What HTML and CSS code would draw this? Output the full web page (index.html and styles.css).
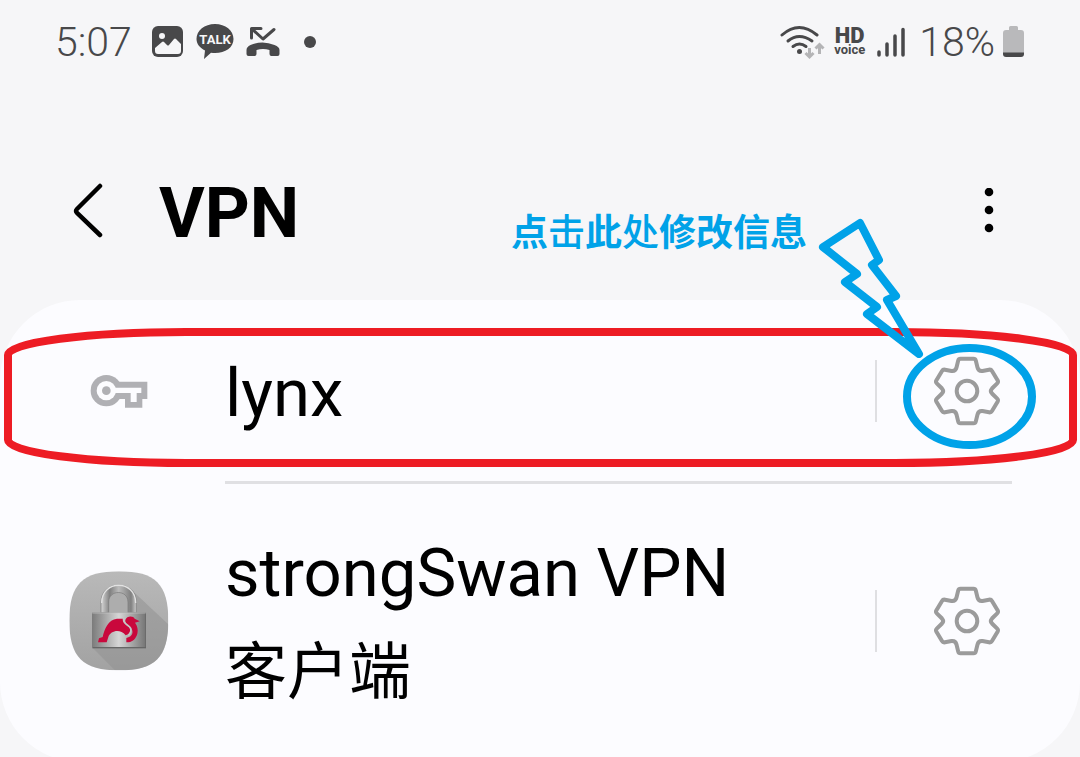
FILE: index.html
```
<!DOCTYPE html>
<html lang="zh-CN">
<head>
    <meta charset="UTF-8">
    <meta name="viewport" content="width=device-width, initial-scale=1.0">
    <title>VPN</title>
    <link rel="stylesheet" href="styles.css">
</head>
<body>
    <div class="statusbar">
        <span class="clock">5:07</span>
        <div class="notices">
            <svg width="32" height="32" viewBox="0 0 32 32">
                <rect width="31" height="31" x="0" y="0" rx="6" fill="#48484a"/>
                <circle cx="10" cy="10" r="3" fill="#f6f6f8"/>
                <path d="M3 22l7-6q1-1 2 0l3 3q1 1 2 0l5-6q1-1 2 0l5 5v7q0 3-3 3H6q-3 0-3-3z" fill="#f6f6f8"/>
            </svg>
            <svg width="38" height="36" viewBox="0 0 38 36">
                <path d="M19 0c10.500 0 18.500 6.500 18.500 15S29.500 29 19 29q-2 0-4-.3L8 35l1-8.500C4 24 .5 20 .5 15 .5 6.500 8.500 0 19 0z" fill="#48484a"/>
                <text x="19" y="20" class="talk" text-anchor="middle">TALK</text>
            </svg>
            <svg width="34" height="32" viewBox="0 0 34 32">
                <path d="M5.500 12V2.500H15M6 3l11 10L28 3.500" fill="none" stroke="#48484a" stroke-width="3" stroke-linecap="round" stroke-linejoin="round"/>
                <path d="M.5 28v-4q0-3 4-5 12-5 24 0 5 2 5 5v4q0 2-2 2h-6q-2 0-2-2v-4q-6.500-2-13 0v4q0 2-2 2h-6q-2 0-2-2z" fill="#48484a"/>
            </svg>
            <span class="dot"></span>
        </div>
        <div class="signals">
            <svg width="46" height="36" viewBox="0 0 46 36">
                <g fill="none" stroke="#48484a" stroke-width="3" stroke-linecap="round">
                    <path d="M2 11q17-15 35 0"/>
                    <path d="M8 17q11-9 24 0"/>
                    <path d="M13 22.500q6.500-5 13 0"/>
                </g>
                <circle cx="19.500" cy="27.500" r="2.500" fill="#48484a"/>
                <path d="M29.500 24v9m-4-4l4 4 4-4M39.500 30V20.500m-4 4l4-4 4 4" fill="none" stroke="#b4b4b6" stroke-width="3"/>
            </svg>
            <span class="hd"><b>HD</b><small>voice</small></span>
            <svg width="28" height="32" viewBox="0 0 28 32">
                <path d="M2 26v3M10 18v11M18 10v19M26 3.500V29" stroke="#48484a" stroke-width="3.500" stroke-linecap="round"/>
            </svg>
            <span class="percent">18%</span>
            <svg width="22" height="32" viewBox="0 0 22 32">
                <path d="M6 4V1.500Q6 0 7.500 0h6Q15 0 15 1.500V4h3q3 0 3 3v20H0V7q0-3 3-3z" fill="#b9b9bb"/>
                <path d="M0 26.500h21V28q0 3-3 3H3q-3 0-3-3z" fill="#48484a"/>
            </svg>
        </div>
    </div>

    <header class="appbar">
        <button class="back" aria-label="返回">
            <svg width="34" height="56" viewBox="0 0 34 56">
                <path d="M29 3L6 26q-2 2 0 4L29 52" fill="none" stroke="#000" stroke-width="4.500" stroke-linecap="round"/>
            </svg>
        </button>
        <h1>VPN</h1>
        <button class="more" aria-label="更多选项">
            <svg width="10" height="46" viewBox="0 0 10 46">
                <circle cx="5" cy="4" r="4.300"/>
                <circle cx="5" cy="22" r="4.300"/>
                <circle cx="5" cy="40" r="4.300"/>
            </svg>
        </button>
    </header>

    <!-- gear drawn once, used by every row -->
    <svg class="defs" width="0" height="0">
        <symbol id="gear" viewBox="-36 -36 72 72">
            <path d="M-6.500-32.300H6.500Q8.300-32.300 8.800-30.500L10.500-23.500Q11.500-19.500 15.500-20L22-21.300Q24-21.700 25-20L30.700-10.500Q31.500-9 30.200-7.700L25-2.500Q22.700 0 25 2.500L30.200 7.700Q31.500 9 30.700 10.500L25 20Q24 21.700 22 21.300L15.500 20Q11.500 19.500 10.500 23.500L8.800 30.500Q8.300 32.300 6.500 32.300H-6.500Q-8.300 32.300-8.800 30.500L-10.500 23.500Q-11.500 19.500-15.500 20L-22 21.300Q-24 21.700-25 20L-30.700 10.500Q-31.500 9-30.200 7.700L-25 2.500Q-22.700 0-25-2.500L-30.200-7.700Q-31.500-9-30.700-10.500L-25-20Q-24-21.700-22-21.300L-15.500-20Q-11.500-19.500-10.500-23.500L-8.800-30.500Q-8.300-32.300-6.500-32.300Z" fill="none" stroke="#9b9b9b" stroke-width="4"/>
            <circle r="10.300" fill="none" stroke="#9b9b9b" stroke-width="4"/>
        </symbol>
    </svg>

    <main class="card">
        <div class="row">
            <div class="icon">
                <svg width="58" height="34" viewBox="270 250 174 102">
                    <path d="M355 273H442V325H427V351H375V325H355z" fill="#b0b0b4"/>
                    <circle cx="319" cy="300" r="47" fill="#b0b0b4"/>
                    <circle cx="319" cy="300" r="29" fill="#fcfcff"/>
                    <path d="M340 291H424V307H410V334H392V307H340z" fill="#fcfcff"/>
                    <circle cx="319" cy="300" r="13" fill="#b0b0b4"/>
                </svg>
            </div>
            <span class="name">lynx</span>
            <button class="gear" aria-label="lynx 设置"><svg width="72" height="72"><use href="#gear"/></svg></button>
            <svg class="frame"><rect x="4" y="4" rx="178" ry="23"/></svg>
        </div>
        <hr>
        <div class="row tall">
            <div class="icon">
                <svg width="100" height="100" viewBox="56 62 300 300">
                    <defs>
                        <linearGradient id="tile" x1="0" y1="0" x2="0" y2="1">
                            <stop offset="0" stop-color="#b9b9b9"/>
                            <stop offset="1" stop-color="#a2a2a2"/>
                        </linearGradient>
                        <linearGradient id="metal">
                            <stop offset="0" stop-color="#7c7c7c"/>
                            <stop offset=".25" stop-color="#a8a8a8"/>
                            <stop offset=".5" stop-color="#d6d6d6"/>
                            <stop offset="1" stop-color="#767676"/>
                        </linearGradient>
                        <linearGradient id="arch">
                            <stop offset="0" stop-color="#d8d8d8"/>
                            <stop offset=".25" stop-color="#808080"/>
                            <stop offset=".5" stop-color="#bbb"/>
                            <stop offset=".85" stop-color="#808080"/>
                            <stop offset="1" stop-color="#ccc"/>
                        </linearGradient>
                        <clipPath id="squircle">
                            <path d="M206 63C315 63 354 102 354 211S315 360 206 360 57 320 57 211 97 63 206 63z"/>
                        </clipPath>
                    </defs>
                    <g clip-path="url(#squircle)">
                        <rect x="56" y="62" width="300" height="300" fill="url(#tile)"/>
                        <path d="M243 118L356 224V362H196L127 292z" fill="#8f8f8f" opacity=".5"/>
                        <path d="M175 188V155C175 117 233 117 233 155V188z" fill="#adadad"/>
                    </g>
                    <path d="M152 188V155C152 87 258 87 258 155V188H233V155C233 117 175 117 175 155V188z" fill="url(#arch)" stroke="#777" stroke-width="2"/>
                    <path d="M154 158C154 87 256 87 256 158" fill="none" stroke="#e2e2e2" stroke-width="4"/>
                    <rect x="126" y="187" width="161" height="107" fill="#666"/>
                    <rect x="126" y="187" width="159" height="103" fill="url(#metal)"/>
                    <path d="M126 188H286" stroke="#c8c8c8" stroke-width="2"/>
                    <path d="M143 276L146 264 157 260C162 236 174 207 200 205H217C216 221 235 224 239 235 242 245 237 250 226 255 210 235 181 240 174 260L169 276z" fill="#c9083c"/>
                    <path d="M225 209C229 196 249 196 253 205L268 213 254 217C272 240 259 277 228 276V263C247 259 251 245 242 233 233 225 223 221 225 209z" fill="#c9083c"/>
                    <path d="M221 205C217 223 236 222 241 234 243 242 242 248 234 255" fill="none" stroke="#c6c6c6" stroke-width="5"/>
                </svg>
            </div>
            <span class="name">strongSwan VPN <span class="cjk">客户端</span></span>
            <button class="gear" aria-label="strongSwan 设置"><svg width="72" height="72"><use href="#gear"/></svg></button>
        </div>

        <p class="hint">点<span>击</span>此<span>处</span>修改信息</p>
        <svg class="pointer" width="224" height="240" viewBox="816 214 224 240">
            <g fill="none" stroke="#00a2e8" stroke-width="8" stroke-linejoin="round">
                <path d="M860 223L879 260 872 265 896 296 887 300 919 354 867 314 877 307 845 282 857 274 823 247z"/>
                <ellipse cx="969.500" cy="396.500" rx="62.500" ry="48.500"/>
            </g>
        </svg>
    </main>
</body>
</html>
```
FILE: styles.css
```
* {
    box-sizing: border-box;
}
body {
    margin: 0;
    min-height: 100vh;
    overflow: hidden;
    background: #f6f6f8;
    color: #000;
    font-family: Roboto, "Noto Sans CJK SC", sans-serif;
}
svg {
    display: block;
}
button {
    display: flex;
    align-items: center;
    justify-content: center;
    padding: 0;
    border: 0;
    background: none;
}
.defs {
    position: absolute;
}

/* status bar */
.statusbar {
    display: flex;
    align-items: center;
    height: 84px;
    padding: 0 55px;
    color: #48484a;
}
.clock, .percent {
    font-size: 41px;
    font-weight: 300;
    line-height: 48px;
}
.notices {
    display: flex;
    align-items: center;
    gap: 12px;
    margin-left: 20px;
}
.talk {
    fill: #f6f6f8;
    font-size: 13px;
    font-weight: 700;
}
.dot {
    width: 12px;
    height: 12px;
    margin-left: 12px;
    border-radius: 50%;
    background: #48484a;
}
.signals {
    display: flex;
    align-items: center;
    gap: 8px;
    margin-left: auto;
}
.signals .percent {
    margin-left: 6px;
}
.hd {
    display: flex;
    flex-direction: column;
    align-items: center;
    margin-right: 4px;
}
.hd b {
    font-size: 22px;
    font-weight: 900;
    line-height: 16px;
}
.hd small {
    font-size: 13px;
    font-weight: 700;
    line-height: 12px;
}

/* title */
.appbar {
    display: flex;
    align-items: center;
    height: 216px;
    padding: 38px 60px 0 70px;
}
.back {
    width: 36px;
    height: 60px;
}
h1 {
    margin: 0 auto 0 53px;
    padding-top: 4px;
    font-size: 70px;
    font-weight: 700;
    line-height: 80px;
}
.more {
    width: 62px;
    height: 60px;
}

/* list */
.card {
    position: relative;
    border-radius: 80px;
    background: #fcfcff;
}
.row {
    position: relative;
    display: flex;
    align-items: center;
    height: 181px;
    padding: 0 23px 0 69px;
}
.tall {
    height: 278px;
    padding-bottom: 4px;
}
.icon {
    display: flex;
    justify-content: center;
    width: 100px;
    margin-right: 56px;
}
.name {
    flex: 1;
    padding-top: 4px;
    font-size: 67px;
    line-height: 98px;
    word-break: keep-all;
}
.cjk {
    font-size: 62px;
}
.gear {
    width: 182px;
    height: 62px;
    border-left: 2px solid #dfdfe2;
}
hr {
    height: 3px;
    margin: 0 68px 0 225px;
    border: 0;
    background: #e0e0e3;
}

/* marks over the list */
.frame {
    position: absolute;
    top: 28px;
    left: 4px;
    width: calc(100% - 7px);
    height: 139px;
    pointer-events: none;
}
.frame rect {
    width: calc(100% - 8px);
    height: calc(100% - 8px);
    fill: none;
    stroke: #ed1c24;
    stroke-width: 8px;
}
.hint {
    position: absolute;
    top: -88px;
    right: 273px;
    margin: 0;
    color: #00a2e8;
    font-size: 37px;
    font-weight: 700;
    line-height: 44px;
}
.hint span {
    font-weight: 500;
}
.pointer {
    position: absolute;
    top: -86px;
    right: 40px;
    pointer-events: none;
}
```
